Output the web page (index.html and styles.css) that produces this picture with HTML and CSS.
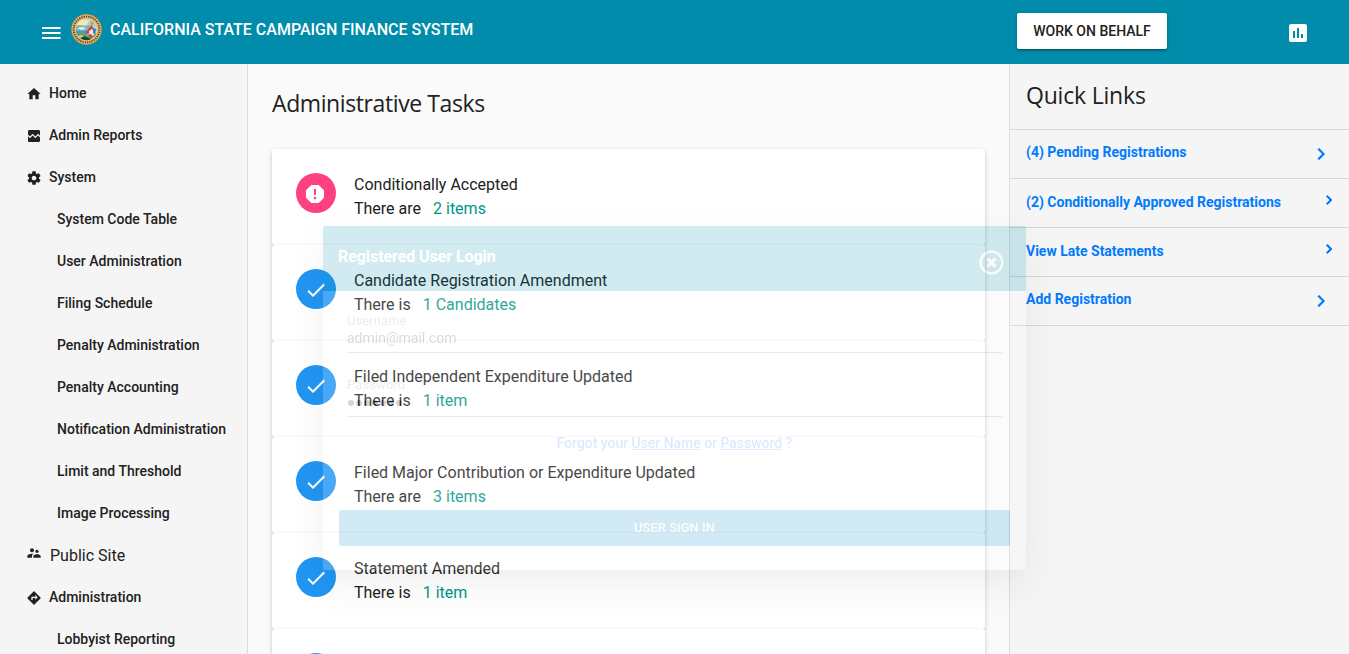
FILE: index.html
```html
<!DOCTYPE html>
<html lang="en">
<head>
<meta charset="utf-8">
<title>California State Campaign Finance System</title>
<link rel="stylesheet" href="styles.css">
</head>
<body>
<header class="toolbar">
  <svg class="menu-icon" viewBox="0 0 24 24"><path d="M3 18h18.500v-2H3v2zm0-5h18.500v-2H3v2zm0-7v2h18.500V6H3z"/></svg>
  <svg class="seal" viewBox="0 0 31 31">
    <defs>
      <clipPath id="scene"><circle cx="15.5" cy="15.5" r="10.7"/></clipPath>
    </defs>
    <circle cx="15.5" cy="15.5" r="15.4" fill="#a08048"/>
    <circle cx="15.5" cy="15.5" r="14.9" fill="#dcb470"/>
    <circle cx="15.5" cy="15.5" r="12.9" fill="none" stroke="#54401f" stroke-width="1.800" stroke-dasharray="1.2 1.1"/>
    <circle cx="15.5" cy="15.5" r="11.2" fill="#e8cf8e"/>
    <g clip-path="url(#scene)">
      <path fill="#a9d5dc" d="M4 4h23v23H4z"/>
      <path fill="#f6e8a8" d="M6 6h12l-2 5H5z"/>
      <path fill="#7fb6c4" d="M4 12l5-1 4 1 5-1 4 2v8H4z"/>
      <path fill="#eef0dc" d="M6 14l6-1 3 2-5 1z"/>
      <path fill="#4b9bb5" d="M5 16.500h12V20H5z"/>
      <path fill="#6c9c62" d="M4 20l7-1 7 3 8-3v8H4z"/>
      <path fill="#263f37" d="M9 23.500l5-1 5 2 3 3H9z"/>
      <path fill="#e59a4c" d="M19 8l3-1 1 3-3 2z"/>
      <path fill="#d94130" d="M18 14l3-3 1 4-2 3-6 2z"/>
      <path fill="#f2eee2" d="M18 17l3-2 3 6-5 1z"/>
      <path fill="#d94130" d="M17 21l3-1 2 3-3 1z"/>
      <path fill="#3f7fae" d="M22 14l3 1-1 6-2-2z"/>
      <path fill="#e5d580" d="M7 22l4-1 1 2-4 1z"/>
    </g>
  </svg>
  <h1 class="brand">CALIFORNIA STATE CAMPAIGN FINANCE SYSTEM</h1>
  <button class="behalf">WORK ON BEHALF</button>
  <svg class="chart-icon" viewBox="0 0 24 24"><path d="M19 3H5c-1.100 0-2 .9-2 2v14c0 1.100.9 2 2 2h14c1.100 0 2-.9 2-2V5c0-1.100-.9-2-2-2zM9 17H7v-7h2v7zm4 0h-2V7h2v10zm4 0h-2v-4h2v4z"/></svg>
</header>

<div class="layout">
  <nav class="sidebar">
    <a class="nav-item"><svg viewBox="0 0 24 24"><path d="M10 20v-6h4v6h5v-8h3L12 3 2 12h3v8z"/></svg>Home</a>
    <a class="nav-item"><svg viewBox="0 0 24 24"><path d="M21 5v6.590l-3-3.010-4 4.010-4-4-4 4-3-3.010V5c0-1.100.9-2 2-2h14c1.100 0 2 .9 2 2zm-3 6.420l3 3.010V19c0 1.100-.9 2-2 2H5c-1.100 0-2-.9-2-2v-6.580l3 2.990 4-4 4 4 4-3.990z"/></svg>Admin Reports</a>
    <a class="nav-item"><svg viewBox="0 0 24 24"><path d="M19.430 12.980c.04-.32.07-.64.07-.98s-.03-.66-.07-.98l2.110-1.650c.19-.15.24-.42.12-.64l-2-3.460c-.12-.22-.39-.3-.61-.22l-2.490 1c-.52-.4-1.080-.73-1.690-.98l-.38-2.650C14.460 2.180 14.250 2 14 2h-4c-.25 0-.46.18-.49.42l-.38 2.650c-.61.25-1.170.59-1.690.98l-2.490-1c-.23-.09-.49 0-.61.22l-2 3.460c-.13.22-.07.49.12.64l2.110 1.650c-.04.32-.07.65-.07.98s.03.66.07.98l-2.110 1.650c-.19.15-.24.42-.12.64l2 3.460c.12.22.39.3.61.22l2.490-1c.52.4 1.080.73 1.690.98l.38 2.650c.03.24.24.42.49.42h4c.25 0 .46-.18.49-.42l.38-2.650c.61-.25 1.170-.59 1.690-.98l2.490 1c.23.09.49 0 .61-.22l2-3.460c.12-.22.07-.49-.12-.64l-2.110-1.650zM12 15.500c-1.930 0-3.500-1.570-3.500-3.500s1.570-3.500 3.500-3.500 3.500 1.570 3.500 3.500-1.570 3.500-3.500 3.500z"/></svg>System</a>
    <a class="nav-item sub">System Code Table</a>
    <a class="nav-item sub">User Administration</a>
    <a class="nav-item sub">Filing Schedule</a>
    <a class="nav-item sub">Penalty Administration</a>
    <a class="nav-item sub">Penalty Accounting</a>
    <a class="nav-item sub">Notification Administration</a>
    <a class="nav-item sub">Limit and Threshold</a>
    <a class="nav-item sub">Image Processing</a>
    <a class="nav-item large"><svg viewBox="0 0 24 24"><path d="M16.500 12c1.380 0 2.490-1.120 2.490-2.500S17.880 7 16.500 7C15.120 7 14 8.120 14 9.500s1.120 2.500 2.500 2.500zM9 11c1.660 0 2.990-1.340 2.990-3S10.660 5 9 5C7.340 5 6 6.340 6 8s1.340 3 3 3zm7.500 3c-1.830 0-5.500.92-5.500 2.750V19h11v-2.250c0-1.830-3.670-2.750-5.500-2.750zM9 13c-2.330 0-7 1.170-7 3.500V19h7v-2.250c0-.85.33-2.340 2.370-3.470C10.500 13.100 9.660 13 9 13z"/></svg>Public Site</a>
    <a class="nav-item"><svg viewBox="0 0 24 24"><path d="M21.710 11.290l-9-9c-.39-.39-1.020-.39-1.410 0l-9 9c-.39.39-.39 1.020 0 1.410l9 9c.39.39 1.020.39 1.410 0l9-9c.39-.38.39-1.010 0-1.410zM14 14.500V12h-4v3H8v-4c0-.55.45-1 1-1h5V7.500l3.500 3.500-3.500 3.500z"/></svg>Administration</a>
    <a class="nav-item sub">Lobbyist Reporting</a>
  </nav>

  <main class="content">
    <h2 class="heading">Administrative Tasks</h2>
    <section class="task">
      <span class="badge alert"><svg viewBox="0 0 24 24"><path d="M15.730 3H8.270L3 8.270v7.460L8.270 21h7.460L21 15.730V8.270L15.730 3zM12 17.300c-.72 0-1.300-.58-1.300-1.300s.58-1.300 1.300-1.300 1.300.58 1.300 1.300-.58 1.300-1.300 1.300zm1-4.300h-2V7h2v6z"/></svg></span>
      <div class="task-text">Conditionally Accepted<div>There are<a>2 items</a></div></div>
    </section>
    <section class="task">
      <span class="badge"><svg viewBox="0 0 24 24"><path d="M9 16.170L4.830 12l-1.420 1.410L9 19 21 7l-1.410-1.410z"/></svg></span>
      <div class="task-text">Candidate Registration Amendment<div>There is<a>1 Candidates</a></div></div>
    </section>
    <section class="task">
      <span class="badge"><svg viewBox="0 0 24 24"><path d="M9 16.170L4.830 12l-1.420 1.410L9 19 21 7l-1.410-1.410z"/></svg></span>
      <div class="task-text">Filed Independent Expenditure Updated<div>There is<a>1 item</a></div></div>
    </section>
    <section class="task">
      <span class="badge"><svg viewBox="0 0 24 24"><path d="M9 16.170L4.830 12l-1.420 1.410L9 19 21 7l-1.410-1.410z"/></svg></span>
      <div class="task-text">Filed Major Contribution or Expenditure Updated<div>There are<a>3 items</a></div></div>
    </section>
    <section class="task">
      <span class="badge"><svg viewBox="0 0 24 24"><path d="M9 16.170L4.830 12l-1.420 1.410L9 19 21 7l-1.410-1.410z"/></svg></span>
      <div class="task-text">Statement Amended<div>There is<a>1 item</a></div></div>
    </section>
    <section class="task">
      <span class="badge"></span>
    </section>
  </main>

  <aside class="quick">
    <h2 class="heading">Quick Links</h2>
    <a class="quick-link raised">(4) Pending Registrations<svg viewBox="0 0 24 24"><path d="M10 6L8.590 7.410 13.170 12l-4.580 4.590L10 18l6-6z"/></svg></a>
    <a class="quick-link small">(2) Conditionally Approved Registrations<svg viewBox="0 0 24 24"><path d="M10 6L8.590 7.410 13.170 12l-4.580 4.590L10 18l6-6z"/></svg></a>
    <a class="quick-link small">View Late Statements<svg viewBox="0 0 24 24"><path d="M10 6L8.590 7.410 13.170 12l-4.580 4.590L10 18l6-6z"/></svg></a>
    <a class="quick-link raised">Add Registration<svg viewBox="0 0 24 24"><path d="M10 6L8.590 7.410 13.170 12l-4.580 4.590L10 18l6-6z"/></svg></a>
  </aside>
</div>

<div class="dialog" role="dialog">
  <div class="dialog-head">Registered User Login
    <svg viewBox="0 0 24 24"><circle cx="12" cy="12" r="10.400"/><path d="M8 8l8 8M16 8l-8 8"/></svg>
  </div>
  <div class="dialog-body">
    <div class="field"><label>Username</label><span class="value">admin@mail.com</span></div>
    <div class="field"><label>Password</label><span class="dots"><i></i><i></i><i></i><i></i><i></i><i></i><i></i></span></div>
    <p class="forgot">Forgot your <u>User Name</u> or <u>Password</u> ?</p>
    <button class="sign-in">USER SIGN IN</button>
  </div>
</div>
</body>
</html>
```
FILE: styles.css
```css
* { box-sizing: border-box; }

body {
  margin: 0;
  height: 654px;
  overflow: hidden;
  position: relative;
  font-family: Roboto, sans-serif;
  font-size: 14px;
  color: #212121;
  background: #fafafa;
}

svg { display: block; flex: none; fill: currentColor; }

/* Top bar */
.toolbar {
  display: flex;
  height: 64px;
  padding: 0 39px;
  background: #008caa;
  color: #fff;
}
.menu-icon { width: 24px; height: 24px; margin-top: 21px; }
.seal { width: 31px; height: 31px; margin: 14px 0 0 8px; }
.brand { margin: 18px 0 0 8px; font-size: 16px; line-height: 24px; font-weight: 500; white-space: nowrap; }
.behalf {
  width: 150px;
  height: 36px;
  margin: 13px 119px 0 auto;
  padding: 0;
  border: 0;
  border-radius: 2px;
  background: #fff;
  color: #212121;
  font: 500 14px/36px Roboto, sans-serif;
  box-shadow: 0 3px 1px -2px rgba(0,0,0,.2), 0 2px 2px rgba(0,0,0,.14), 0 1px 5px rgba(0,0,0,.12);
}
.chart-icon { width: 24px; height: 24px; margin: 21px 0 0; }

.layout { display: grid; grid-template-columns: 248px 761px 340px; height: 590px; overflow: hidden; }

/* Left navigation */
.sidebar { padding: 8px 0 0 26px; background: #f5f5f5; border-right: 1px solid #dcdcdc; height: 620px; }
.nav-item { display: flex; align-items: center; height: 42px; font-weight: 500; white-space: nowrap; }
.nav-item svg { width: 16px; height: 16px; margin: 2px 7px 0 0; }
.nav-item.sub { padding-left: 31px; }
.nav-item.large { font-size: 16px; font-weight: 400; }
.nav-item.large svg { width: 16px; height: 16px; margin: -5px 8px 0 0; }

/* Task list */
.heading {
  margin: 0;
  font: 400 23px/32px "Open Sans", "Noto Sans", sans-serif;
  letter-spacing: -.4px;
  white-space: nowrap;
}
.content { padding: 23px 24px 0; }
.content .heading { margin-bottom: 30px; }
.task {
  display: flex;
  height: 96px;
  padding: 24px 24px 0;
  background: #fff;
  border-radius: 3px;
  box-shadow: 0 2px 4px rgba(0,0,0,.22);
}
.badge { display: flex; width: 40px; height: 40px; border-radius: 50%; background: #2196f3; color: #fff; }
.badge svg { width: 24px; height: 24px; margin: 9px 0 0 8px; }
.badge.alert { background: #ff4081; }
.badge.alert svg { margin-left: 7px; }
.task-text { margin-left: 18px; font-size: 16px; line-height: 24px; white-space: nowrap; }
.task-text a { margin-left: 12px; color: #009688; }

/* Quick links */
.quick { background: #f5f5f5; border-left: 1px solid #dcdcdc; }
.quick .heading { height: 66px; padding: 15px 16px 0; border-bottom: 1px solid #d6d6d6; letter-spacing: -.2px; }
.quick-link {
  display: flex;
  align-items: center;
  justify-content: space-between;
  height: 49px;
  padding: 0 16px 2px;
  border-bottom: 1px solid #d6d6d6;
  color: #007bff;
  font-weight: 700;
  white-space: nowrap;
}
.quick-link svg { width: 24px; height: 24px; stroke: currentColor; stroke-width: .2; }
.quick-link.raised { padding-bottom: 5px; }
.quick-link.raised svg { margin-top: 5px; }
.quick-link.small svg { width: 18px; height: 18px; margin: -5px -5px 0 0; stroke-width: 1.2; }

/* Login dialog, partway through its fade */
.dialog {
  position: absolute;
  left: 323px;
  top: 226px;
  width: 703px;
  height: 344px;
  opacity: .18;
  background: #fff;
  border-radius: 2px;
  box-shadow: 0 11px 15px -7px rgba(0,0,0,.2), 0 24px 38px 3px rgba(0,0,0,.14), 0 9px 46px 8px rgba(0,0,0,.12);
}
.dialog-head {
  display: flex;
  justify-content: space-between;
  height: 65px;
  padding: 18px 22px 0 15px;
  border-radius: 2px 2px 0 0;
  background: #008caa;
  color: #fff;
  font-size: 16px;
  line-height: 25px;
  font-weight: 700;
  letter-spacing: -.07px;
}
.dialog-head svg { width: 25px; height: 25px; margin-top: 5.5px; fill: none; stroke: #fff; stroke-width: 2.200; }
.dialog-head path { stroke-width: 3; }
.dialog-body { padding: 20px 16px 0; }
.field { width: 655px; height: 42px; margin: 0 0 22px 8px; border-bottom: 1px solid #8c8c8c; }
.field label { display: block; font-size: 13px; line-height: 20px; letter-spacing: .1px; color: #8f8f8f; }
.value { display: block; line-height: 15px; font-size: 14px; color: #333; }
.dots { display: flex; gap: 2px; padding: 5px 0 0 1px; }
.dots i { width: 6px; height: 6px; border-radius: 50%; background: #111; }
.forgot { margin: -5px 0 0; text-align: center; line-height: 18px; letter-spacing: -.03px; color: #2f90ff; font-weight: 500; }
.sign-in {
  display: block;
  width: 671px;
  height: 36px;
  margin-top: 58px;
  padding: 0;
  border: 0;
  border-radius: 2px;
  background: #0288c8;
  color: #eee;
  font: 500 13px/34px Roboto, sans-serif;
}
```
